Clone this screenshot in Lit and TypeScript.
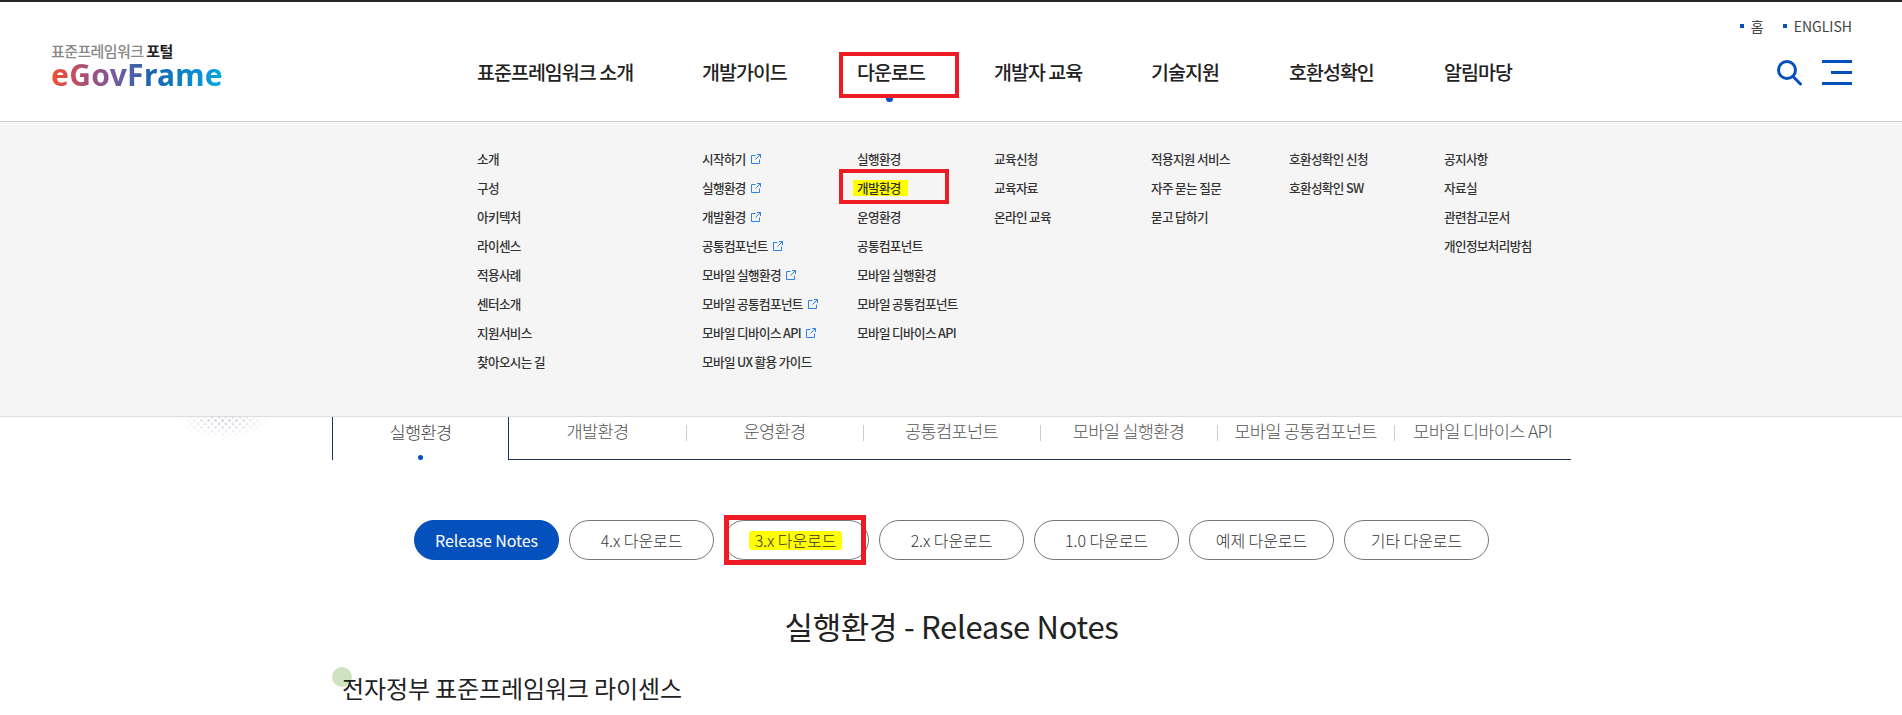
import { LitElement, html, css, svg } from "lit";
import { customElement } from "lit/decorators.js";

type Item = { t: string; ext?: boolean };
const i = (...l: string[]): Item[] => l.map((t) => ({ t }));
const e = (...l: string[]): Item[] => l.map((t) => ({ t, ext: true }));

const NAV: { label: string; items: Item[] }[] = [
  { label: "표준프레임워크 소개", items: i("소개", "구성", "아키텍처", "라이센스", "적용사례", "센터소개", "지원서비스", "찾아오시는 길") },
  {
    label: "개발가이드",
    items: [...e("시작하기", "실행환경", "개발환경", "공통컴포넌트", "모바일 실행환경", "모바일 공통컴포넌트", "모바일 디바이스 API"), { t: "모바일 UX 활용 가이드" }],
  },
  { label: "다운로드", items: i("실행환경", "개발환경", "운영환경", "공통컴포넌트", "모바일 실행환경", "모바일 공통컴포넌트", "모바일 디바이스 API") },
  { label: "개발자 교육", items: i("교육신청", "교육자료", "온라인 교육") },
  { label: "기술지원", items: i("적용지원 서비스", "자주 묻는 질문", "묻고 답하기") },
  { label: "호환성확인", items: i("호환성확인 신청", "호환성확인 SW") },
  { label: "알림마당", items: i("공지사항", "자료실", "관련참고문서", "개인정보처리방침") },
];
const TABS = ["실행환경", "개발환경", "운영환경", "공통컴포넌트", "모바일 실행환경", "모바일 공통컴포넌트", "모바일 디바이스 API"];
const PILLS = ["Release Notes", "4.x 다운로드", "3.x 다운로드", "2.x 다운로드", "1.0 다운로드", "예제 다운로드", "기타 다운로드"];

const extIcon = svg`<svg class="ext" viewBox="0 0 10 10" width="10" height="10" fill="none" stroke="#2f80ed" stroke-width="1"><path d="M4.5 1.5H.5v8h8V5.5"/><path d="M6 .5h3.5V4M9.5.5 4.5 5.5"/></svg>`;

@customElement("app-root")
export class AppRoot extends LitElement {
  static styles = css`
    :host {
      display: block;
      width: 1902px;
      height: 715px;
      overflow: hidden;
      background: #fff;
      font-family: "Noto Sans CJK KR", "Noto Sans", sans-serif;
      color: #222;
    }
    .page {
      position: relative;
      height: 715px;
    }
    header {
      border-top: 2px solid #262626;
      height: 119px;
      border-bottom: 1px solid #ccc;
      display: flex;
      position: relative;
    }
    .logo {
      width: 477px;
      flex: none;
      box-sizing: border-box;
      padding: 41px 0 0 51px;
      display: flex;
      flex-direction: column;
    }
    .logo small {
      font-size: 15px;
      line-height: 16px;
      color: #888;
      font-weight: 500;
      letter-spacing: -0.04em;
    }
    .logo small b {
      color: #222;
      font-weight: 700;
    }
    .logo strong {
      font-family: "Noto Sans", sans-serif;
      font-size: 30px;
      line-height: 32px;
      font-weight: 700;
      letter-spacing: 0.01em;
      width: fit-content;
      background: linear-gradient(90deg, #f4502f 0%, #a3507a 22%, #7c5a9c 36%, #1566b2 60%, #00a8e2 100%);
      -webkit-background-clip: text;
      background-clip: text;
      color: transparent;
    }
    .right {
      flex: 1;
      display: flex;
      flex-direction: column;
    }
    .top {
      height: 48px;
      display: flex;
      justify-content: flex-end;
      align-items: center;
      gap: 19px;
      padding-right: 50px;
      font-size: 14px;
      color: #444;
    }
    .top span {
      display: flex;
      align-items: center;
      gap: 7px;
    }
    .top i {
      width: 4px;
      height: 4px;
      background: #0450bc;
    }
    .grid {
      display: grid;
      grid-template-columns: 225px 155px 137px 157px 138px 155px 1fr;
    }
    .nav {
      padding-top: 4px;
      font-size: 19.5px;
      font-weight: 500;
      letter-spacing: -0.05em;
      line-height: 36px;
      color: #222;
    }
    .nav span {
      position: relative;
      display: inline-block;
      white-space: nowrap;
    }
    .nav .on::after {
      content: "";
      position: absolute;
      left: 50%;
      bottom: -12px;
      width: 7px;
      height: 7px;
      margin-left: -5px;
      border-radius: 50%;
      background: #0450bc;
    }
    .tools {
      position: absolute;
      right: 50px;
      top: 58px;
      display: flex;
      gap: 19px;
    }
    .panel {
      height: 295px;
      background: #f5f5f5;
      border-bottom: 1px solid #ddd;
      padding: 22px 0 0 477px;
      box-sizing: border-box;
      font-size: 12.6px;
      font-weight: 500;
      letter-spacing: -0.05em;
      color: #333;
    }
    .panel ul {
      list-style: none;
      margin: 0;
      padding: 0;
    }
    .panel li {
      height: 29px;
      line-height: 28px;
      display: flex;
      align-items: center;
      gap: 5px;
      white-space: nowrap;
    }
    .ext {
      flex: none;
    }
    .hl {
      background: #ffff00;
      margin-left: -4px;
      padding: 0 7px 0 4px;
      line-height: 16px;
    }
    .content {
      width: 1239px;
      margin-left: 332px;
      position: relative;
    }
    .tabs {
      display: grid;
      grid-template-columns: repeat(7, 1fr);
      height: 43px;
      font-size: 17.6px;
      font-weight: 300;
      color: #555;
      letter-spacing: -0.04em;
      text-align: center;
      line-height: 28px;
    }
    .tabs div {
      border-bottom: 1px solid #1c3560;
      position: relative;
      white-space: nowrap;
    }
    .tabs div:not(.active):not(:nth-child(2))::before {
      content: "";
      position: absolute;
      left: 0;
      top: 8px;
      height: 16px;
      width: 1px;
      background: #ccc;
    }
    .tabs .active {
      border: 1px solid #1c3560;
      border-width: 0 1px;
      line-height: 30px;
      color: #444;
    }
    .tabs .active::after {
      content: "";
      position: absolute;
      left: 50%;
      bottom: 0;
      margin-left: -3px;
      width: 5px;
      height: 5px;
      border-radius: 50%;
      background: #0450bc;
    }
    .pills {
      margin-top: 60px;
      display: flex;
      justify-content: center;
      gap: 10px;
      font-size: 16px;
      letter-spacing: -0.005em;
      font-weight: 300;
      color: #333;
    }
    .pills div {
      width: 145px;
      height: 40px;
      box-sizing: border-box;
      border: 1px solid #777;
      border-radius: 20px;
      display: flex;
      align-items: center;
      justify-content: center;
      white-space: nowrap;
    }
    .pills .primary {
      background: #0450bc;
      border-color: #0450bc;
      color: #fff;
      font-weight: 400;
    }
    .pills mark {
      background: #ffff00;
      color: inherit;
      padding: 0 6px;
      margin-left: -2px;
      line-height: 19px;
      border-radius: 3px;
    }
    h1 {
      margin: 42px 0 0;
      font-size: 31px;
      line-height: 48px;
      font-weight: 400;
      text-align: center;
      color: #222;
      letter-spacing: -0.01em;
    }
    h2 {
      margin: 18px 0 0;
      padding-left: 10px;
      font-size: 24px;
      line-height: 40px;
      font-weight: 400;
      color: #222;
      position: relative;
      z-index: 0;
      letter-spacing: -0.005em;
    }
    h2::before {
      content: "";
      position: absolute;
      z-index: -1;
      left: 0;
      top: -1px;
      width: 20px;
      height: 20px;
      border-radius: 50%;
      background: #cfe3c0;
    }
    .redbox {
      position: absolute;
      border: 4px solid #ed1c24;
      box-sizing: border-box;
      pointer-events: none;
    }
    .r1 { left: 839px; top: 52px; width: 120px; height: 46px; }
    .r2 { left: 839px; top: 169px; width: 110px; height: 35px; }
    .r3 { left: 724px; top: 515px; width: 142px; height: 50px; border-width: 5px; }
    .dots {
      position: absolute;
      left: 177px;
      top: 417px;
      width: 94px;
      height: 22px;
      background-image:
        radial-gradient(circle, #d3d7e0 1.2px, transparent 1.6px),
        radial-gradient(circle, #d3d7e0 1.2px, transparent 1.6px);
      background-size: 7px 7px;
      background-position: 0 0, 3.5px 3.5px;
      -webkit-mask-image: radial-gradient(ellipse 50% 100% at 50% 0, #000 20%, transparent 100%);
      mask-image: radial-gradient(ellipse 50% 100% at 50% 0, #000 20%, transparent 100%);
    }
  `;

  render() {
    return html`<div class="page">
      <header>
        <div class="logo">
          <small>표준프레임워크 <b>포털</b></small>
          <strong>eGovFrame</strong>
        </div>
        <div class="right">
          <div class="top">
            <span><i></i>홈</span>
            <span><i></i>ENGLISH</span>
          </div>
          <div class="nav grid">
            ${NAV.map((n, x) => html`<div><span class=${x === 2 ? "on" : ""}>${n.label}</span></div>`)}
          </div>
        </div>
        <div class="tools">
          <svg width="26" height="26" viewBox="0 0 26 26" fill="none" stroke="#0450bc" stroke-width="3">
            <circle cx="10" cy="10" r="8.5" />
            <path d="M16 16.5l7.5 7.5" stroke-linecap="round" />
          </svg>
          <svg width="30" height="26" viewBox="0 0 30 26" fill="#0450bc">
            <rect x="0" y="0" width="30" height="3" />
            <rect x="9" y="11" width="21" height="3" />
            <rect x="0" y="22" width="30" height="3" />
          </svg>
        </div>
      </header>
      <div class="panel grid">
        ${NAV.map(
          (n, x) => html`<ul>
            ${n.items.map(
              (it, y) => html`<li>
                ${x === 2 && y === 1 ? html`<span class="hl">${it.t}</span>` : html`<span>${it.t}</span>`}
                ${it.ext ? extIcon : ""}
              </li>`
            )}
          </ul>`
        )}
      </div>
      <div class="content">
        <div class="tabs">
          ${TABS.map((t, x) => html`<div class=${x === 0 ? "active" : ""}>${t}</div>`)}
        </div>
        <div class="pills">
          ${PILLS.map(
            (p, x) => html`<div class=${x === 0 ? "primary" : ""}>${x === 2 ? html`<mark>${p}</mark>` : p}</div>`
          )}
        </div>
        <h1>실행환경 - Release Notes</h1>
        <h2>전자정부 표준프레임워크 라이센스</h2>
      </div>
      <div class="dots"></div>
      <div class="redbox r1"></div>
      <div class="redbox r2"></div>
      <div class="redbox r3"></div>
    </div>`;
  }
}
